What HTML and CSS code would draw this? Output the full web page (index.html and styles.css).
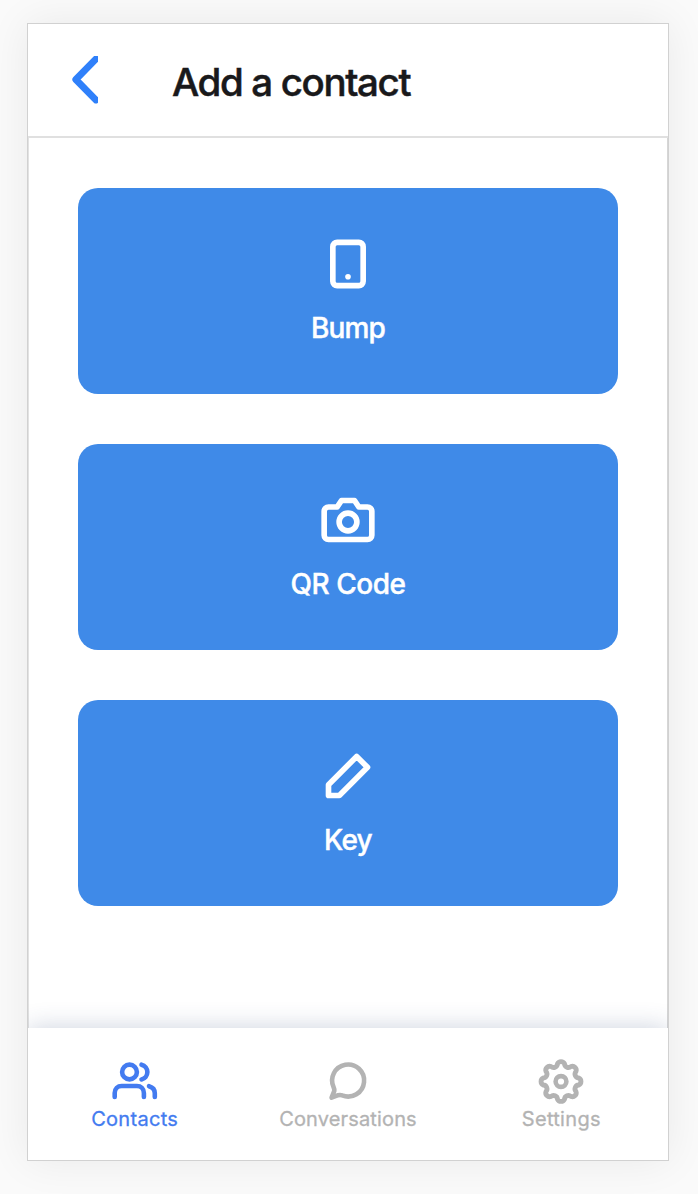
FILE: index.html
```html
<!DOCTYPE html>
<html lang="en">
<head>
<meta charset="utf-8">
<title>Add a contact</title>
<link rel="stylesheet" href="styles.css">
</head>
<body>
<div class="phone">
  <header class="header">
    <svg class="back" width="26" height="48" viewBox="0 0 26 48"><path d="M24 3 L3.800 23.500 L24 44"/></svg>
    <h1 class="title">Add a contact</h1>
  </header>
  <main class="content">
    <button class="card">
      <svg class="card-icon" viewBox="0 0 24 24"><rect x="5" y="2" width="14" height="20" rx="2"/><path d="M12 17.900v.01"/></svg>
      <span class="card-label bump">Bump</span>
    </button>
    <button class="card">
      <svg class="card-icon" viewBox="0 0 24 24"><path d="M23 19a2 2 0 0 1-2 2H3a2 2 0 0 1-2-2V8a2 2 0 0 1 2-2h4l2-3h6l2 3h4a2 2 0 0 1 2 2z"/><circle cx="12" cy="12.9" r="4.100"/></svg>
      <span class="card-label qr">QR Code</span>
    </button>
    <button class="card">
      <svg class="card-icon" viewBox="0 0 24 24"><path d="M16 3l5 5L8 21H3v-5z"/></svg>
      <span class="card-label key">Key</span>
    </button>
  </main>
  <nav class="tabs">
    <a class="tab active">
      <svg class="tab-icon" viewBox="0 0 48 48"><circle cx="18.500" cy="15" r="7.400"/><path d="M3.700 40v-4c0-4.500 3-7 7-7h15.200c4 0 7 2.500 7 7v4M30.500 7.700a7.600 7.600 0 0 1 0 14.800M38 29.200c3.500 1 5.800 3.300 5.800 7V40"/></svg>
      <span class="tab-label contacts">Contacts</span>
    </a>
    <a class="tab">
      <svg class="tab-icon" viewBox="0 0 48 48"><path d="M9.700 30.500A16 16 0 1 1 18.200 38.400Q16.400 37.600 14.200 38.200L7.600 40.600L10.300 33.800Q10.500 32.200 9.700 30.500z"/></svg>
      <span class="tab-label conversations">Conversations</span>
    </a>
    <a class="tab">
      <svg class="tab-icon" viewBox="-24 -24 48 48"><g transform="translate(0 .5)"><circle r="5.400"/><path transform="scale(1.060)" d="M16.670 -3.320A3.650 3.650 0 0 1 16.670 3.320A3.700 3.700 0 0 0 14.130 9.440A3.650 3.650 0 0 1 9.440 14.130A3.700 3.700 0 0 0 3.320 16.670A3.650 3.650 0 0 1 -3.320 16.670A3.700 3.700 0 0 0 -9.440 14.130A3.650 3.650 0 0 1 -14.130 9.440A3.700 3.700 0 0 0 -16.670 3.320A3.650 3.650 0 0 1 -16.670 -3.320A3.700 3.700 0 0 0 -14.130 -9.440A3.650 3.650 0 0 1 -9.440 -14.130A3.700 3.700 0 0 0 -3.320 -16.670A3.650 3.650 0 0 1 3.320 -16.670A3.700 3.700 0 0 0 9.440 -14.130A3.650 3.650 0 0 1 14.130 -9.440A3.700 3.700 0 0 0 16.670 -3.320z"/></g></svg>
      <span class="tab-label settings">Settings</span>
    </a>
  </nav>
</div>
</body>
</html>
```
FILE: styles.css
```css
* { box-sizing: border-box; }
body {
  margin: 0;
  height: 1194px;
  padding: 23px 29px 33px 27px;
  background: #fafafa;
  font-family: Inter, "Liberation Sans", sans-serif;
  overflow: hidden;
}
.phone {
  display: flex;
  flex-direction: column;
  width: 642px;
  height: 1138px;
  border: 1px solid #d1d1d1;
  background: #fff;
  box-shadow: 0 0 40px rgba(0, 0, 0, .07);
}
.header {
  display: flex;
  align-items: center;
  gap: 74px;
  height: 114px;
  padding-left: 44px;
  border-bottom: 2px solid #e0e0e0;
}
.back {
  fill: none;
  stroke: #2f80fa;
  stroke-width: 6.800;
  margin-top: -1px;
  stroke-linejoin: round;
  stroke-linecap: round;
  overflow: hidden;
}
.title {
  margin: 3px 0 0;
  color: #19191b;
  font-size: 38.500px;
  line-height: 48px;
  font-weight: 500;
  letter-spacing: -1.380px;
  -webkit-text-stroke: .5px currentColor;
  white-space: nowrap;
}
.content {
  display: flex;
  flex-direction: column;
  gap: 50px;
  flex: 1;
  padding: 50px 49px 0;
  border: 1px solid #e2e2e2;
  border-width: 0 1px;
  border-right-color: #d6d6d6;
}
.card {
  display: flex;
  flex-direction: column;
  align-items: center;
  gap: 20px;
  height: 206px;
  margin: 0;
  padding: 50px 0 0;
  border: 0;
  border-radius: 20px;
  background: #3f8ae8;
  color: #fff;
  font-family: inherit;
}
.card-icon {
  width: 52px;
  height: 52px;
  overflow: visible;
  fill: none;
  stroke: #fff;
  stroke-width: 2.600;
  stroke-linecap: round;
  stroke-linejoin: round;
}
.card-label {
  font-size: 28px;
  line-height: 36px;
  font-weight: 500;
  letter-spacing: -.5px;
  -webkit-text-stroke: .4px currentColor;
}
.bump { letter-spacing: -.9px; }
.key { letter-spacing: -.8px; }
.tabs {
  position: relative;
  display: grid;
  grid-template-columns: repeat(3, 1fr);
  height: 132px;
  padding-top: 29px;
  background: #fff;
  box-shadow: 0 0 24px rgba(40, 65, 115, .24);
  clip-path: inset(-40px 0 0 0);
}
.tab { display: flex; flex-direction: column; align-items: center; color: #b3b3b3; }
.tab.active { color: #437bf0; }
.tab-icon {
  width: 48px;
  height: 48px;
  fill: none;
  stroke: currentColor;
  stroke-width: 4.600;
  stroke-linecap: round;
  stroke-linejoin: round;
}
.tab-label {
  font-size: 20px;
  line-height: 28px;
  letter-spacing: .3px;
  -webkit-text-stroke: .3px currentColor;
}
.conversations { letter-spacing: .15px; }
```
